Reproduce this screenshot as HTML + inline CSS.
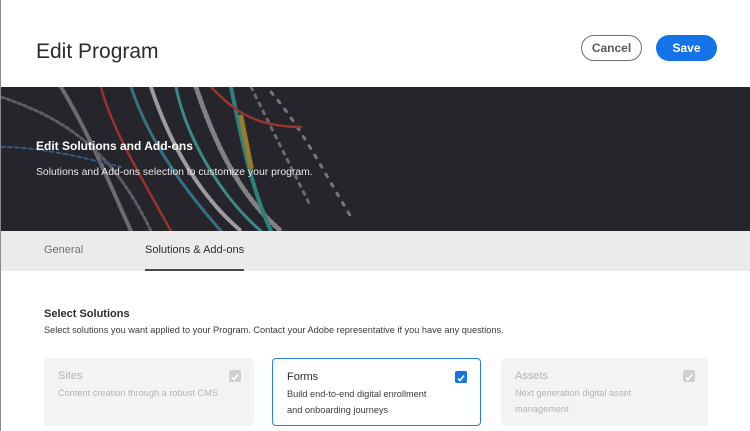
<!DOCTYPE html>
<html><head><meta charset="utf-8"><style>
*{margin:0;padding:0;box-sizing:border-box}
body{width:750px;height:431px;overflow:hidden;background:#fff;font-family:"Liberation Sans",sans-serif;position:relative;border-left:1px solid #8a8a8a}
.title{position:absolute;left:35px;top:40px;font-size:21px;color:#2c2c2c;font-weight:400}
.btn{position:absolute;top:35px;height:26px;width:61px;border-radius:13px;font-size:12px;font-weight:bold;text-align:center;line-height:24px}
.cancel{left:580px;border:1.5px solid #707070;color:#5a5a5a}
.save{left:655px;background:#1473e6;color:#fff;line-height:26px}
.banner{position:absolute;left:0;top:87px;width:750px;height:144px;background:#26252b;overflow:hidden}
.banner h2{position:absolute;left:35px;top:52px;color:#fff;font-size:12px;font-weight:bold}
.banner p{position:absolute;left:35px;top:80px;color:#e8e8e8;font-size:10.4px}
.tabs{position:absolute;left:0;top:231px;width:750px;height:40px;background:#ebebeb}
.tab{position:absolute;top:13px;font-size:11px;color:#6e6e6e}
.tab.act{color:#2c2c2c}
.ul{position:absolute;left:144px;top:38px;width:99px;height:2px;background:#4b4b4b}
.h3{position:absolute;left:43px;top:308px;font-size:11px;font-weight:bold;color:#2c2c2c}
.sub{position:absolute;left:43px;top:325px;font-size:9.2px;color:#3a3a3a}
.card{position:absolute;top:358px;width:210px;height:68px;border-radius:4px;background:#f3f3f3;padding:12px 14px}
.card b{display:block;font-weight:normal;font-size:11px;color:#b3b3b3;margin-bottom:3px}
.card span{font-size:9.2px;color:#b3b3b3;line-height:16px;display:block}
.card.sel{background:#fff;border:1.5px solid #2680eb}
.card.sel b{color:#2c2c2c}.card.sel span{color:#3a3a3a}
.cb{position:absolute;right:13px;top:12px;width:12px;height:12px;border-radius:2px;background:#d0d0d0}
.sel .cb{background:#1473e6}
</style></head><body>
<div class="title">Edit Program</div>
<div class="btn cancel">Cancel</div>
<div class="btn save">Save</div>
<div class="banner">
<svg width="400" height="144" style="position:absolute;left:0;top:0;opacity:.7" fill="none" stroke-linecap="round">
<path d="M60 0 C90 50 110 100 130 144" stroke="#8a8a8a" stroke-width="4" stroke-dasharray="2 2"/>
<path d="M100 0 C110 40 140 90 170 144" stroke="#c93a2e" stroke-width="2.5"/>
<path d="M0 10 C60 30 110 60 150 144" stroke="#777" stroke-width="3" stroke-dasharray="3 3"/>
<path d="M130 0 C150 60 190 110 220 144" stroke="#3c8fa8" stroke-width="3"/>
<path d="M150 0 C170 60 200 110 240 144" stroke="#d0d0d0" stroke-width="4" stroke-dasharray="2 2"/>
<path d="M175 0 C185 50 220 110 260 144" stroke="#46b5b0" stroke-width="3"/>
<path d="M195 0 C215 60 240 110 280 144" stroke="#aaa" stroke-width="5" stroke-dasharray="2 3"/>
<path d="M230 0 C240 50 250 100 270 144" stroke="#2fa89c" stroke-width="4"/>
<path d="M250 0 C270 40 290 80 310 120" stroke="#888" stroke-width="3" stroke-dasharray="3 6"/>
<path d="M270 5 C300 40 320 80 350 130" stroke="#999" stroke-width="3" stroke-dasharray="3 8"/>
<path d="M210 0 C230 20 250 40 300 40" stroke="#c93a2e" stroke-width="2.5"/>
<path d="M0 60 C40 60 80 70 120 80" stroke="#3c6fa8" stroke-width="2" stroke-dasharray="4 3"/>
<path d="M240 30 L250 80" stroke="#c9a02e" stroke-width="5"/>
</svg>
<h2>Edit Solutions and Add-ons</h2>
<p>Solutions and Add-ons selection to customize your program.</p>
</div>
<div class="tabs"><div class="tab" style="left:43px">General</div><div class="tab act" style="left:144px">Solutions &amp; Add-ons</div><div class="ul"></div></div>
<div class="h3">Select Solutions</div>
<div class="sub">Select solutions you want applied to your Program. Contact your Adobe representative if you have any questions.</div>
<div class="card" style="left:43px"><b>Sites</b><span>Content creation through a robust CMS</span><div class="cb"><svg width="12" height="12"><path d="M3 6.5 L5 8.5 L9 3.5" stroke="#fff" stroke-width="1.6" fill="none"/></svg></div></div>
<div class="card sel" style="left:271px;width:209px"><b>Forms</b><span>Build end-to-end digital enrollment<br>and onboarding journeys</span><div class="cb"><svg width="12" height="12"><path d="M3 6.5 L5 8.5 L9 3.5" stroke="#fff" stroke-width="1.6" fill="none"/></svg></div></div>
<div class="card" style="left:500px;width:207px"><b>Assets</b><span>Next generation digital asset<br>management</span><div class="cb"><svg width="12" height="12"><path d="M3 6.5 L5 8.5 L9 3.5" stroke="#fff" stroke-width="1.6" fill="none"/></svg></div></div>
</body></html>
